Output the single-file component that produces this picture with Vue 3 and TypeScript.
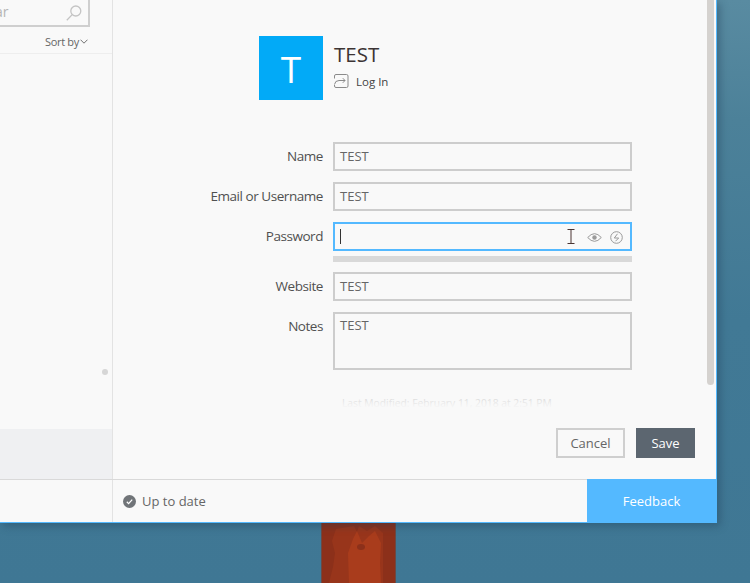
<script setup lang="ts">
interface Field { label: string; value: string }
const before: Field[] = [
  { label: 'Name', value: 'TEST' },
  { label: 'Email or Username', value: 'TEST' },
]
</script>

<template>
  <div class="desktop">
    <div class="window">
      <div class="body">
        <aside class="side">
          <div class="search-wrap">
            <div class="search">
              <span class="search-text">ar</span>
              <svg class="search-icon" width="18" height="18" viewBox="0 0 18 18" fill="none" stroke="#c4c4c4" stroke-width="1.3">
                <circle cx="10.8" cy="7" r="5" />
                <path d="M7.2 10.6 L1.8 16.2" />
              </svg>
            </div>
          </div>
          <div class="sort">
            <span class="sort-text">Sort by</span>
            <svg width="8" height="5" viewBox="0 0 8 5" fill="none" stroke="#707070" stroke-width="1"><path d="M.5 .7 L4 4.2 L7.5 .7" /></svg>
          </div>
          <div class="list">
            <span class="dot"></span>
          </div>
          <div class="selected"></div>
        </aside>
        <main class="main">
          <div class="scroll">
            <div class="head">
              <div class="avatar">T</div>
              <div class="head-text">
                <div class="title">TEST</div>
                <div class="login">
                  <svg width="15" height="15" viewBox="0 0 15 15" fill="none" stroke="#8a8a8a" stroke-width="1">
                    <path d="M.5 4.5 V2 Q.5 .5 2 .5 H12.5 Q14 .5 14 2 V12 Q14 13.5 12.5 13.5 H2 Q.5 13.5 .5 12 V11" />
                    <path d="M.5 10.5 Q1 6.5 5 6.5 H11 M8.8 4.2 L11 6.5 L8.8 8.8" />
                  </svg>
                  <span>Log In</span>
                </div>
              </div>
            </div>
            <div class="form">
              <div v-for="f in before" :key="f.label" class="row">
                <label class="label">{{ f.label }}</label>
                <div class="input">{{ f.value }}</div>
              </div>
              <div class="row row-pass">
                <label class="label">Password</label>
                <div class="input input-focus">
                  <span class="caret"></span>
                  <svg class="ibeam" width="8" height="15" viewBox="0 0 8 15" fill="none" stroke="#4a3533" stroke-width="1">
                    <path d="M.5 .5 H7.5 M4 .5 V14.5 M.5 14.5 H7.5" />
                  </svg>
                  <svg class="eye" width="15" height="11" viewBox="0 0 15 11" fill="none" stroke="#9a9a9a" stroke-width="1">
                    <path d="M.7 5.5 Q7.5 -2.2 14.3 5.5 Q7.5 13.2 .7 5.5 Z" />
                    <circle cx="7.5" cy="5.5" r="2.2" fill="#9a9a9a" stroke="none" />
                  </svg>
                  <svg class="bolt" width="13" height="13" viewBox="0 0 13 13" fill="none" stroke="#9a9a9a" stroke-width="1">
                    <circle cx="6.5" cy="6.5" r="5.8" />
                    <path d="M7.5 2.8 L4.3 7 H8.7 L5.5 10.2" />
                  </svg>
                </div>
              </div>
              <div class="strength"></div>
              <div class="row">
                <label class="label">Website</label>
                <div class="input">TEST</div>
              </div>
              <div class="row">
                <label class="label">Notes</label>
                <div class="input notes">TEST</div>
              </div>
              <div class="modified">Last Modified: February 11, 2018 at 2:51 PM</div>
            </div>
            <div class="fade"></div>
            <div class="scrollbar"></div>
          </div>
          <div class="actions">
            <button class="btn cancel">Cancel</button>
            <button class="btn save">Save</button>
          </div>
        </main>
      </div>
      <footer class="footer">
        <div class="foot-side"></div>
        <div class="status">
          <svg width="13" height="13" viewBox="0 0 13 13">
            <circle cx="6.5" cy="6.5" r="6.5" fill="#707478" />
            <path d="M3.8 6.8 L5.6 8.6 L9.2 4.6" fill="none" stroke="#fff" stroke-width="1.3" />
          </svg>
          <span>Up to date</span>
        </div>
        <div class="feedback">Feedback</div>
      </footer>
    </div>
    <svg class="pillar" width="75" height="60" viewBox="0 0 75 60">
      <rect width="75" height="60" fill="#8c301a" />
      <path d="M15 6 L33 3 L36 9 L38 3 L46 8 L54 3 L62 10 L62 60 L8 60 L12 44 L14 30 L11 18 Z" fill="#98351b" />
      <path d="M28 60 L27 30 L32 16 L36 8 L41 20 L48 13 L54 8 L60 20 L59 40 L60 60 Z" fill="#a93c1c" />
      <ellipse cx="40" cy="24" rx="4" ry="3" fill="#8c301a" />
      <rect x="0" width="1" height="60" fill="#6a4a45" />
      <rect x="74" width="1" height="60" fill="#6a4a45" />
    </svg>
  </div>
</template>

<style>
html, body { margin: 0; padding: 0; overflow: hidden; }
</style>

<style scoped>
.desktop {
  width: 750px;
  height: 583px;
  background: linear-gradient(180deg, #598ba1 0, #4c8199 120px, #417995 320px, #3f7794 100%);
  font-family: "Open Sans", "Noto Sans", sans-serif;
  overflow: hidden;
  position: relative;
}
.window {
  width: 717px;
  height: 523px;
  box-sizing: border-box;
  background: #f9f9f9;
  border-right: 1px solid #54b9ff;
  border-bottom: 1px solid #54b9ff;
  box-shadow: 3px 3px 8px rgba(30, 60, 85, .4);
  display: flex;
  flex-direction: column;
  position: relative;
  z-index: 1;
}
.body { flex: 1; display: flex; min-height: 0; }
.side {
  width: 113px;
  box-sizing: border-box;
  border-right: 1px solid #e3e3e3;
  display: flex;
  flex-direction: column;
}
.search-wrap { height: 26px; position: relative; }
.search {
  box-sizing: border-box;
  position: absolute;
  left: -40px; right: 22px; top: -10px;
  height: 37px;
  border: 2px solid #cfcfcf;
  display: flex;
  align-items: center;
  justify-content: flex-end;
  padding: 10px 2px 0 0;
}
.search-text { font-size: 14px; color: #b5b5b5; position: absolute; left: 33px; top: 10px; }
.search-icon { margin-top: -2px; margin-right: 3px; }
.sort {
  height: 28px;
  box-sizing: border-box;
  border-bottom: 1px solid #eeeeee;
  display: flex;
  align-items: center;
  justify-content: flex-end;
  gap: 1px;
  padding: 4px 24px 0 0;
  font-size: 11px;
  color: #666;
}
.sort-text { letter-spacing: -.3px; }
.list { flex: 1; position: relative; }
.dot {
  position: absolute; right: 4px; top: 315px;
  width: 6px; height: 6px; border-radius: 50%;
  background: #d6d6d6;
}
.selected { height: 50px; background: #eff0f2; }
.main { flex: 1; min-width: 0; display: flex; flex-direction: column; }
.scroll { height: 410px; overflow: hidden; position: relative; padding-left: 146px; box-sizing: border-box; padding-top: 36px; }
.head { display: flex; gap: 11px; }
.avatar {
  width: 64px; height: 64px;
  background: #02aaf7;
  color: #fff;
  font-size: 37px;
  display: flex; align-items: center; justify-content: center;
}
.head-text { padding-top: 3px; }
.title { font-size: 20.5px; line-height: 30px; color: #3c3434; }
.login {
  display: flex; align-items: center; gap: 7px;
  margin-top: 5px;
  font-size: 11.5px; color: #444;
}
.form { width: 373px; margin-left: -76px; margin-top: 42px; display: flex; flex-direction: column; }
.row { display: flex; gap: 10px; margin-bottom: 11px; align-items: flex-start; }
.row-pass { margin-bottom: 5px; }
.label {
  width: 140px;
  text-align: right;
  font-size: 13.5px;
  letter-spacing: -.45px;
  line-height: 29px;
  color: #505050;
  flex: none;
}
.input {
  box-sizing: border-box;
  width: 299px;
  height: 29px;
  flex: none;
  border: 2px solid #cdcdcd;
  padding: 0 5px;
  font-size: 13px;
  line-height: 25px;
  color: #666;
  display: flex;
  align-items: center;
  position: relative;
}
.input-focus { border-color: #54b9ff; }
.caret { width: 1px; height: 15px; background: #333; }
.ibeam { position: absolute; left: 232px; top: 5px; }
.eye { position: absolute; left: 252px; top: 8px; }
.bolt { position: absolute; left: 275px; top: 7px; }
.notes { height: 58px; align-items: flex-start; line-height: 23px; }
.strength { width: 299px; height: 6px; background: #d9d9d9; margin: 0 0 10px 150px; }
.modified {
  margin: 16px 0 0 150px;
  padding-left: 9px;
  font-size: 10.3px;
  line-height: 13px;
  color: #d4d4d4;
  white-space: nowrap;
}
.fade {
  position: absolute; left: 0; right: 0; top: 397px; height: 13px;
  background: linear-gradient(180deg, rgba(249,249,249,.1), #f9f9f9 85%);
}
.scrollbar {
  position: absolute; left: 594px; top: 0;
  width: 7px; height: 385px;
  border-radius: 0 0 4px 4px;
  background: #d5d2cf;
}
.actions { flex: 1; display: flex; justify-content: flex-end; gap: 11px; padding: 18px 21px 0 0; align-items: flex-start; }
.btn {
  box-sizing: border-box;
  height: 30px;
  font-family: inherit;
  font-size: 13px;
  padding: 0;
}
.cancel { width: 69px; border: 2px solid #cfcfcf; background: #f9f9f9; color: #666; }
.save { width: 59px; border: none; background: #5c6670; color: #fff; }
.footer {
  height: 43px;
  flex: none;
  box-sizing: border-box;
  border-top: 1px solid #d9d9d9;
  display: flex;
}
.foot-side { width: 113px; box-sizing: border-box; border-right: 1px solid #e3e3e3; }
.status {
  flex: 1;
  display: flex; align-items: center; gap: 6px;
  padding-left: 10px;
  font-size: 13px;
  color: #666;
}
.feedback {
  width: 129px;
  margin-top: -1px;
  background: #54b9ff;
  color: #fff;
  font-size: 13px;
  display: flex; align-items: center; justify-content: center;
}
.pillar {
  position: absolute; left: 321px; top: 523px;
}
</style>
